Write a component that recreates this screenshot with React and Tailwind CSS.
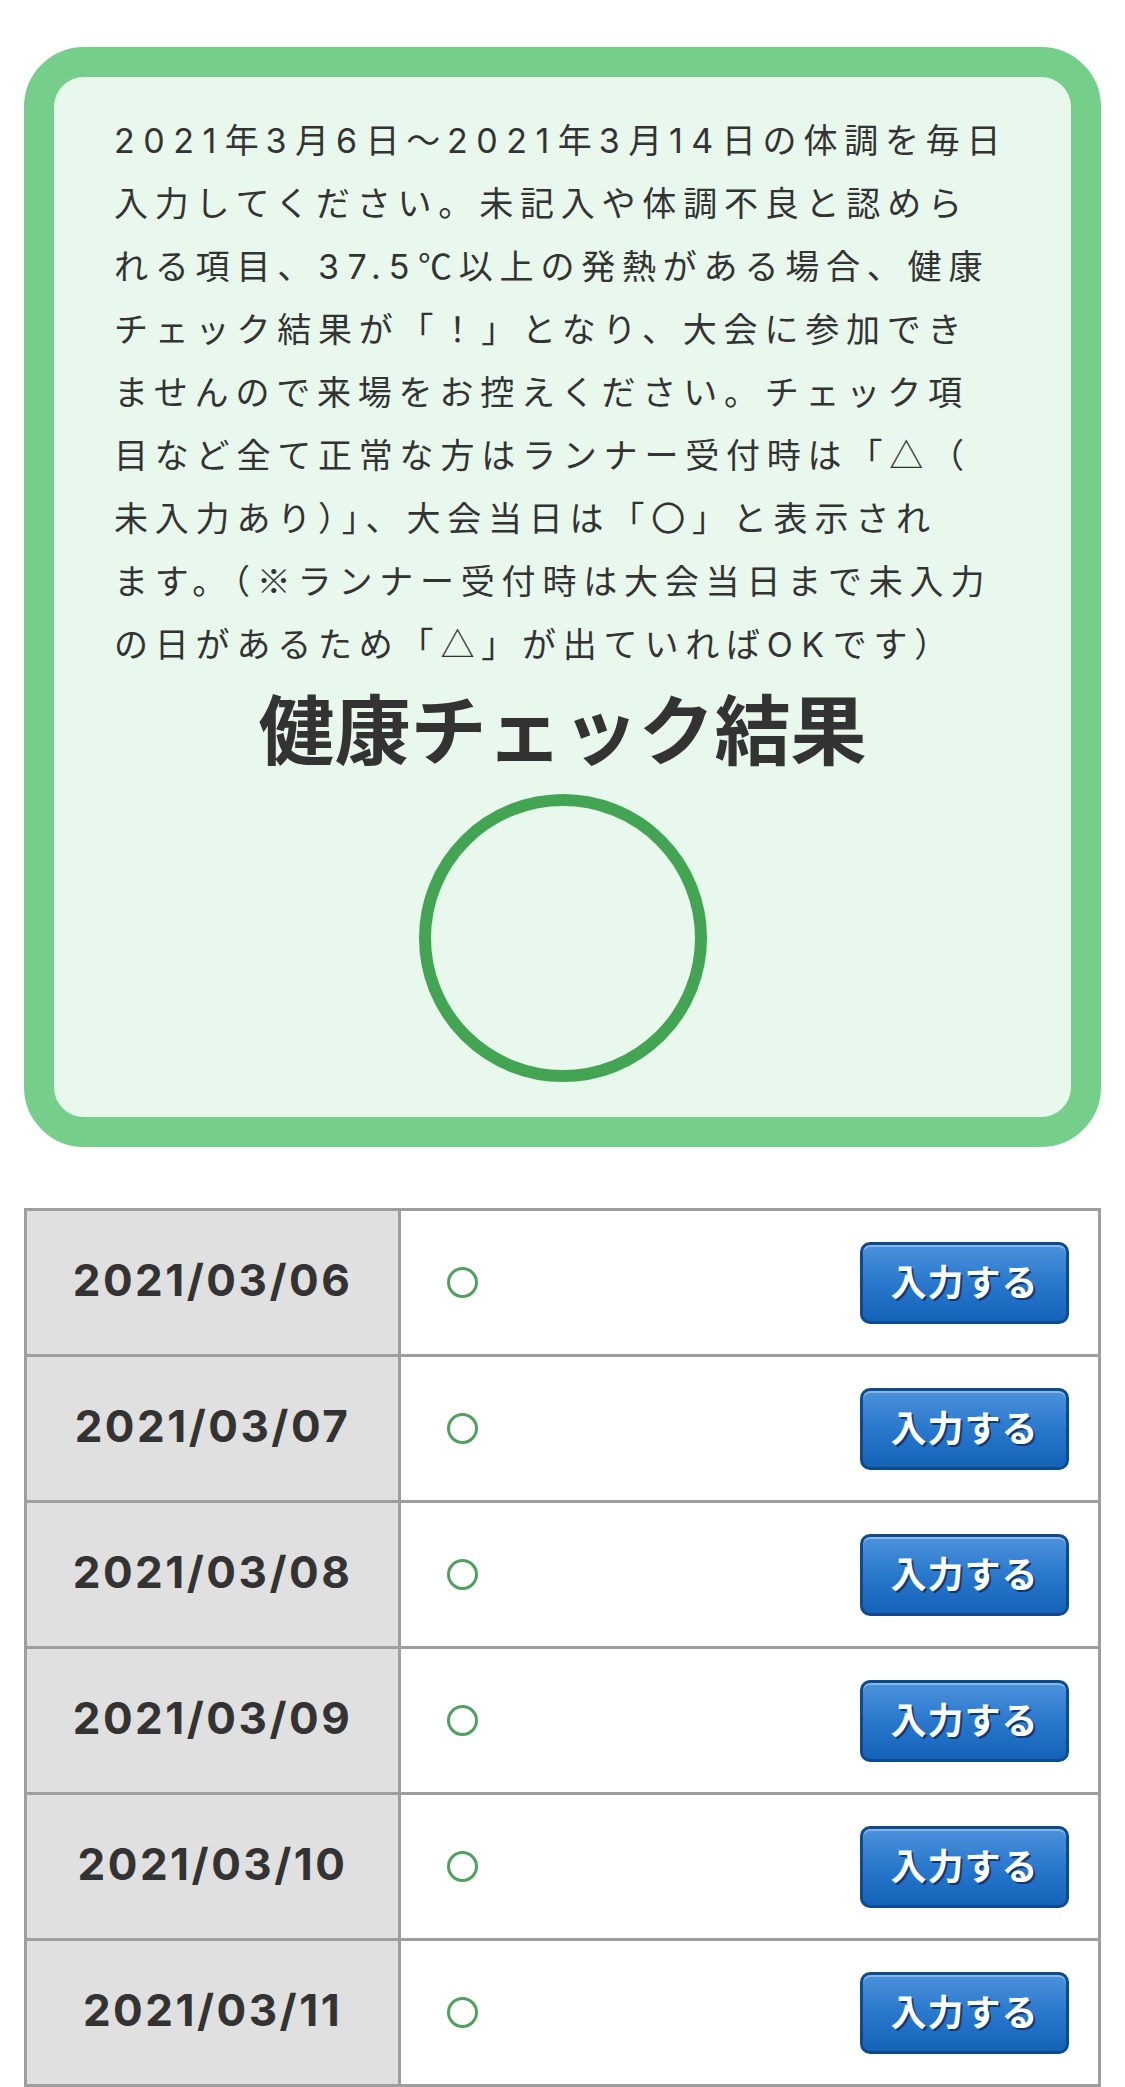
import React from "react";

const lines = [
  "2021年3月6日～2021年3月14日の体調を毎日",
  "入力してください。未記入や体調不良と認めら",
  "れる項目、37.5℃以上の発熱がある場合、健康",
  "チェック結果が「！」となり、大会に参加でき",
  "ませんので来場をお控えください。チェック項",
  "目など全て正常な方はランナー受付時は「△（",
  "未入力あり）」、大会当日は「〇」と表示され",
  "ます。（※ランナー受付時は大会当日まで未入力",
  "の日があるため「△」が出ていればOKです）",
];

const dates = [
  "2021/03/06",
  "2021/03/07",
  "2021/03/08",
  "2021/03/09",
  "2021/03/10",
  "2021/03/11",
];

const jp = { fontFamily: '"Noto Sans CJK JP", "Noto Sans", sans-serif' };
const latin = { fontFamily: 'Inter, "Noto Sans CJK JP", sans-serif' };

function Line({ text }) {
  const parts = text.split(/([0-9A-Za-z.]+)/);
  return parts.map((p, i) =>
    /^[0-9A-Za-z.]+$/.test(p) ? (
      <span key={i} className="leading-none tracking-[8.5px]" style={latin}>
        {p}
      </span>
    ) : (
      <React.Fragment key={i}>{p}</React.Fragment>
    )
  );
}

export default function App() {
  return (
    <div className="w-[1125px] bg-white px-6 pt-[47px]" style={jp}>
      <div className="rounded-[60px] border-[30px] border-[#75cf8a] bg-[#e8f8ec] pb-[35px] pt-[30px]">
        <p className="whitespace-nowrap pl-[60px] text-[34px] font-normal leading-[63px] tracking-[0.2em] text-[#333]">
          {lines.map((l, i) => (
            <React.Fragment key={i}>
              <Line text={l} />
              {i < lines.length - 1 && <br />}
            </React.Fragment>
          ))}
        </p>
        <h2 className="mt-[7px] text-center text-[76px] font-bold leading-[91px] text-[#333]">
          健康チェック結果
        </h2>
        <div className="mx-auto mt-[22px] h-[288px] w-[288px] rounded-full border-[12px] border-[#43a553]" />
      </div>

      <div className="mt-[61px] border-[3px] border-b-0 border-[#9e9e9e]">
        {dates.map((d) => (
          <div key={d} className="flex h-[146px] border-b-[3px] border-[#9e9e9e]">
            <div className="flex w-[374px] items-center justify-center border-r-[3px] border-[#9e9e9e] bg-[#e0e0e0]">
              <span
                className="mb-[6px] text-[44px] font-bold leading-none tracking-[2.5px] text-[#333]"
                style={latin}
              >
                {d}
              </span>
            </div>
            <div className="flex flex-1 items-center bg-white pl-[46px] pr-[29px]">
              <div className="h-[31px] w-[31px] rounded-full border-[3px] border-[#4fa15f]" />
              <button className="ml-auto flex h-[82px] w-[209px] items-center justify-center rounded-[10px] border-[3px] border-[#0f4a8c] bg-[linear-gradient(to_bottom,#4b92dc,#2a78cc_50%,#1463b9)] pb-[6px] text-[36px] font-bold tracking-[1px] text-white shadow-[inset_0_2px_0_rgba(255,255,255,0.35)] [text-shadow:2px_2px_0_#0d3c74]">
                入力する
              </button>
            </div>
          </div>
        ))}
      </div>
    </div>
  );
}
